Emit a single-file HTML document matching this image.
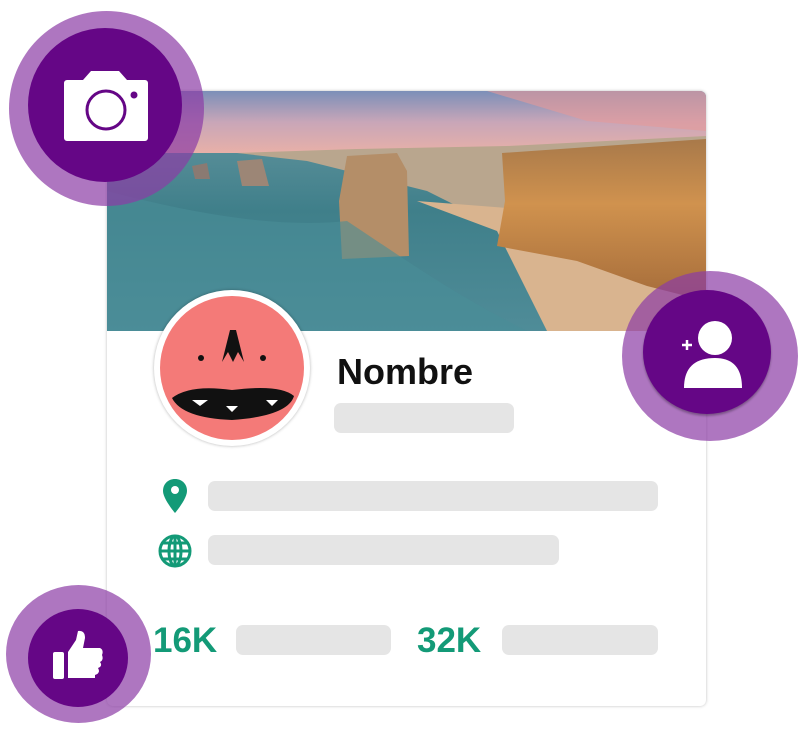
<!DOCTYPE html>
<html><head><meta charset="utf-8"><style>
*{margin:0;padding:0;box-sizing:border-box}
body{width:799px;height:736px;background:#fff;position:relative;overflow:hidden;font-family:"Liberation Sans",sans-serif}
.abs{position:absolute}
.card{left:107px;top:91px;width:599px;height:615px;border-radius:6px;box-shadow:0 0 3px rgba(0,0,0,.25);background:#fff;overflow:hidden}
.bar{position:absolute;background:#e5e5e5;border-radius:7px;height:30px}
.circ{position:absolute;border-radius:50%}
.num{position:absolute;color:#139a77;font-weight:bold;font-size:35px;letter-spacing:0}
</style></head><body>
<div class="abs card">
<svg width="599" height="240" viewBox="0 0 599 240" style="position:absolute;left:0;top:0">
<defs>
<linearGradient id="sky" x1="0" y1="0" x2="0" y2="1"><stop offset="0" stop-color="#7c8fb8"/><stop offset=".5" stop-color="#c8a6b8"/><stop offset="1" stop-color="#e8b0a8"/></linearGradient>
<linearGradient id="sea" x1="0" y1="0" x2="0" y2="1"><stop offset="0" stop-color="#6d9aa4"/><stop offset=".5" stop-color="#3f7f8a"/><stop offset="1" stop-color="#4f8c98"/></linearGradient>
<linearGradient id="cliff" x1="0" y1="0" x2="0" y2="1"><stop offset="0" stop-color="#a8794a"/><stop offset=".4" stop-color="#d0924e"/><stop offset="1" stop-color="#a56c3a"/></linearGradient>
</defs>
<rect width="599" height="240" fill="url(#sea)"/>
<rect width="599" height="62" fill="url(#sky)"/>
<path d="M380 0 L599 0 L599 40 L480 30 Z" fill="#e69a98" opacity=".6"/>
<path d="M130 62 L250 58 L400 55 L599 45 L599 240 L470 240 L420 200 L400 140 L320 100 L200 70 Z" fill="#b9a68e"/>
<path d="M310 110 L390 140 L420 200 L440 240 L599 240 L599 200 L520 160 L440 120 Z" fill="#d9b48f"/>
<path d="M395 62 L599 48 L599 210 L540 195 L470 170 L390 155 L398 110 Z" fill="url(#cliff)"/>
<path d="M240 65 L290 62 L300 80 L302 165 L235 168 L232 110 Z" fill="#b48e68"/>
<path d="M130 70 L155 68 L162 95 L135 95 Z" fill="#9c8676"/>
<path d="M85 75 L100 72 L103 88 L88 88 Z" fill="#8a7a72"/>
<path d="M0 100 Q150 140 240 130 L300 170 Q360 210 420 240 L0 240 Z" fill="#4a8d98" opacity=".6"/>
</svg>
<div class="bar" style="left:227px;top:312px;width:180px"></div>
<div class="abs" style="left:230px;top:260px;font-size:36px;font-weight:bold;color:#111">Nombre</div>
<div class="bar" style="left:101px;top:390px;width:450px"></div>
<div class="bar" style="left:101px;top:444px;width:351px"></div>
<div class="bar" style="left:129px;top:534px;width:155px"></div>
<div class="bar" style="left:395px;top:534px;width:156px"></div>
<div class="num" style="left:46px;top:530px">16K</div>
<div class="num" style="left:310px;top:530px">32K</div>
<svg class="abs" style="left:55px;top:387px" width="26" height="36" viewBox="0 0 26 36"><path d="M13 1C6 1 1 6 1 13c0 8 12 22 12 22s12-14 12-22C25 6 20 1 13 1z" fill="#139a77"/><circle cx="13" cy="12" r="4" fill="#fff"/></svg>
<svg class="abs" style="left:51px;top:443px" width="34" height="34" viewBox="0 0 34 34" fill="none" stroke="#139a77" stroke-width="3"><circle cx="17" cy="17" r="15"/><ellipse cx="17" cy="17" rx="6" ry="15"/><path d="M2 17h30M5 9h24M5 25h24M17 2v30"/></svg>
</div>
<div class="circ" style="left:154px;top:290px;width:156px;height:156px;background:#fff;box-shadow:0 0 3px rgba(0,0,0,.3)"></div>
<div class="circ" style="left:160px;top:296px;width:144px;height:144px;background:#f47a78;overflow:hidden">
<svg width="144" height="144" viewBox="0 0 144 144"><path d="M12 102 Q30 88 72 94 Q120 88 134 100 Q128 120 72 124 Q22 122 12 102Z" fill="#111"/><path d="M32 104l8 6 8-6z M66 110l6 6 6-6z M106 104l6 6 6-6z" fill="#fff"/><circle cx="41" cy="62" r="3" fill="#111"/><circle cx="103" cy="62" r="3" fill="#111"/><path d="M62 66 L70 34 L76 34 L84 66 L78 56 L73 66 L68 56 Z" fill="#111"/></svg>
</div>
<div class="circ" style="left:9px;top:11px;width:195px;height:195px;background:rgba(140,60,165,.7)"></div>
<div class="circ" style="left:28px;top:28px;width:154px;height:154px;background:#650686"></div>
<svg class="abs" style="left:63px;top:70px" width="86" height="72" viewBox="0 0 86 72"><path d="M4 10h16l8-9h28l8 9h18a3 3 0 0 1 3 3v55a3 3 0 0 1-3 3H4a3 3 0 0 1-3-3V13a3 3 0 0 1 3-3z" fill="#fff"/><circle cx="43" cy="40" r="19" fill="none" stroke="#650686" stroke-width="3"/><circle cx="71" cy="25" r="3.5" fill="#650686"/></svg>
<div class="circ" style="left:622px;top:271px;width:176px;height:170px;background:rgba(140,60,165,.7)"></div>
<div class="circ" style="left:643px;top:290px;width:128px;height:124px;background:#650686;box-shadow:0 2px 2px rgba(0,0,0,.3)"></div>
<svg class="abs" style="left:680px;top:320px" width="62" height="70" viewBox="0 0 62 70"><circle cx="35" cy="18" r="17" fill="#fff"/><path d="M4 68 Q4 38 35 38 Q62 38 62 68 Z" fill="#fff"/><path d="M2 25h10M7 20v10" stroke="#fff" stroke-width="2.5"/></svg>
<div class="circ" style="left:6px;top:585px;width:145px;height:138px;background:rgba(140,60,165,.7)"></div>
<div class="circ" style="left:28px;top:609px;width:100px;height:98px;background:#650686"></div>
<svg class="abs" style="left:52px;top:630px" width="52" height="50" viewBox="0 0 52 50"><rect x="1" y="22" width="11" height="27" rx="2" fill="#fff"/><path d="M16 22 L24 10 L26 1 Q33 0 33 8 L31 18 L48 18 Q52 20 50 25 Q52 30 48 32 Q51 36 46 38 Q49 43 43 45 L43 48 L16 48 Z" fill="#fff"/></svg>
</body></html>
